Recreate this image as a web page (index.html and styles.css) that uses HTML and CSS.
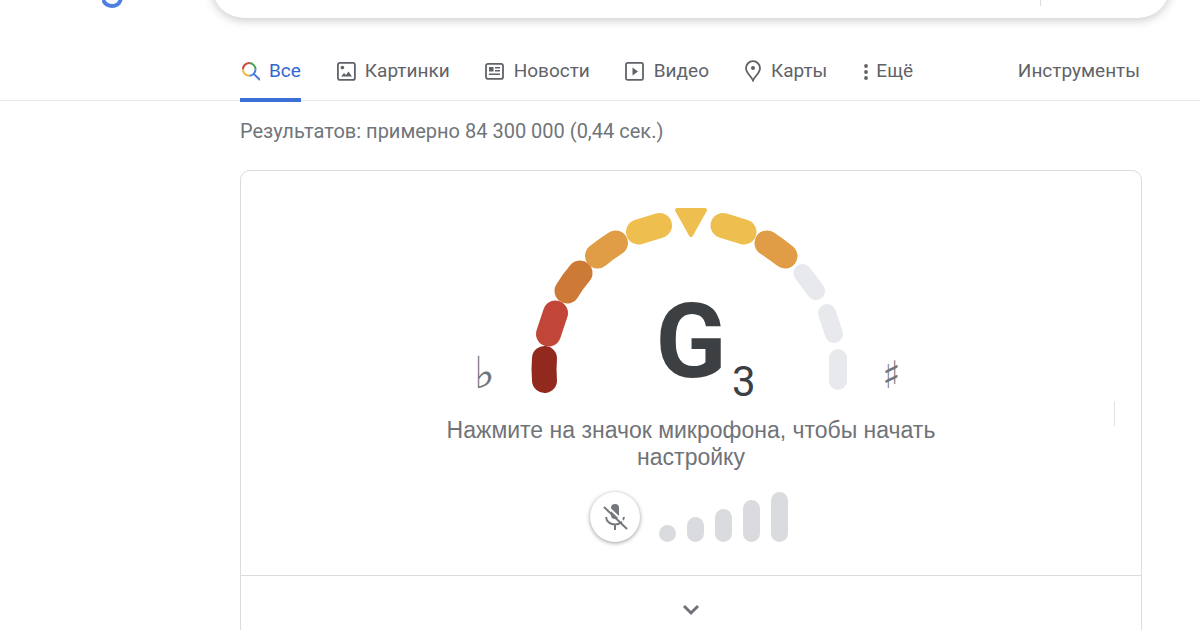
FILE: index.html
```html
<!DOCTYPE html>
<html lang="ru">
<head>
    <meta charset="UTF-8">
    <meta name="viewport" content="width=device-width, initial-scale=1.0">
    <title>Google</title>
    <link rel="stylesheet" href="styles.css">
</head>
<body>

<header class="header">
    <a class="logo" href="#" aria-label="Google">
        <svg width="22" height="30" viewBox="0 0 22 30" fill="none" stroke="#4f7fe0" stroke-width="4">
            <circle cx="10" cy="2" r="7"/>
            <path d="M19 0v18c0 6-3 10-9 10-4 0-7-2-9-6"/>
        </svg>
    </a>
    <form class="search">
        <input class="search-input" type="text" aria-label="Поиск">
        <span class="search-divider"></span>
    </form>
</header>

<nav class="nav">
    <div class="nav-inner">
        <a class="tab active" href="#">
            <svg width="20" height="20" viewBox="0 0 20 20" fill="none" stroke-width="2">
                <path d="M3 8.5A6.2 6.2 0 0 1 9 2" stroke="#d0473a"/>
                <path d="M9 2a6.4 6.4 0 0 1 6.5 6.5" stroke="#4a9c56"/>
                <path d="M15.5 8.5A6.2 6.2 0 0 1 9.3 14.7M13.7 12.9L20 19" stroke="#4a7bdc"/>
                <path d="M9.3 14.7A6.2 6.2 0 0 1 3 8.5" stroke="#efb93c"/>
            </svg>
            Все
        </a>
        <a class="tab" href="#">
            <svg width="20" height="20" viewBox="0 0 20 20">
                <rect x="1.9" y="1.9" width="17" height="17" rx="2" fill="none" stroke="#5f6368" stroke-width="1.8"/>
                <circle cx="6.4" cy="6.6" r="1.8" fill="#5f6368"/>
                <path d="M5 15.6l3-3.6 2 2 2.5-3.5 3.5 5.1z" fill="#5f6368"/>
            </svg>
            Картинки
        </a>
        <a class="tab" href="#">
            <svg width="20" height="20" viewBox="0 0 20 20">
                <rect x="1" y="2.9" width="17" height="15" rx="2" fill="none" stroke="#5f6368" stroke-width="1.8"/>
                <path d="M4 6h4.5v4.5H4zM10 6h5v1.6h-5zM10 9h5v1.6h-5zM4 12.4h11v1.7H4z" fill="#5f6368"/>
            </svg>
            Новости
        </a>
        <a class="tab" href="#">
            <svg width="20" height="20" viewBox="0 0 20 20">
                <rect x="1" y="1.9" width="17" height="17" rx="1.5" fill="none" stroke="#5f6368" stroke-width="1.8"/>
                <path d="M7.5 6.5v8l5.5-4z" fill="#5f6368"/>
            </svg>
            Видео
        </a>
        <a class="tab" href="#">
            <svg width="18" height="22" viewBox="0 0 18 22">
                <path d="M9 20.5C7.5 16.5 2 13 2 8.2a7 7 0 0 1 14 0C16 13 10.5 16.5 9 20.5z" fill="none" stroke="#5f6368" stroke-width="1.8"/>
                <circle cx="9" cy="8" r="2" fill="#5f6368"/>
            </svg>
            Карты
        </a>
        <a class="tab more" href="#">
            <svg width="8" height="20" viewBox="0 0 8 20" fill="#5f6368">
                <circle cx="4" cy="5" r="1.9"/>
                <circle cx="4" cy="11" r="1.9"/>
                <circle cx="4" cy="17" r="1.9"/>
            </svg>
            Ещё
        </a>
        <a class="tab tools" href="#">Инструменты</a>
    </div>
</nav>

<main class="main">
    <p class="stats">Результатов: примерно 84 300 000 (0,44 сек.)</p>

    <section class="card">
        <div class="tuner">
            <svg class="gauge" width="450" height="210" viewBox="0 0 450 210">
                <g class="segments">
                    <path d="M78.5 180.5Q77.5 169 78.5 158.5" stroke="#92291f"/>
                    <path d="M82.5 134L89.5 113" stroke="#c24637"/>
                    <path d="M101 91Q107 81 114 73" stroke="#ce7a37"/>
                    <path d="M131.5 56Q140 49 149.5 43" stroke="#e19d45"/>
                    <path d="M172.5 32L193.5 25.5" stroke="#eebf4f"/>
                    <path d="M257 25.5L278 32" stroke="#eebf4f"/>
                    <path d="M301 43Q310 49 319 56" stroke="#e19d45"/>
                </g>
                <g class="segments empty">
                    <path d="M336.5 73L350 91"/>
                    <path d="M361 113L368 134"/>
                    <path d="M372 158V181"/>
                </g>
                <path d="M211 10H239L225 35z" fill="#eebf4f" stroke="#eebf4f" stroke-width="4" stroke-linejoin="round"/>
                <text class="sign flat" x="8" y="188">♭</text>
                <text class="note" x="225" y="177">G</text>
                <text class="octave" x="266" y="196">3</text>
                <text class="sign sharp" x="416" y="188">♯</text>
            </svg>

            <p class="hint">Нажмите на значок микрофона, чтобы начать настройку</p>

            <div class="controls">
                <button class="mic" type="button" aria-label="Микрофон">
                    <svg width="28" height="28" viewBox="0 0 28 28">
                        <rect x="10" y="1" width="8" height="15" rx="4" fill="#74787c"/>
                        <path d="M5 14c1 10 17 10 18 0M14 21v6" fill="none" stroke="#74787c" stroke-width="2"/>
                        <path d="M5 2L28 24" stroke="#fff" stroke-width="2"/>
                        <path d="M3 4L26 26" stroke="#74787c" stroke-width="2"/>
                    </svg>
                </button>
                <div class="levels">
                    <span class="level level-1"></span>
                    <span class="level level-2"></span>
                    <span class="level level-3"></span>
                    <span class="level level-4"></span>
                    <span class="level level-5"></span>
                </div>
            </div>
            <span class="marker"></span>
        </div>
        <button class="expand" type="button" aria-label="Развернуть">
            <svg width="18" height="12" viewBox="0 0 18 12" fill="none" stroke="#707377" stroke-width="3">
                <path d="M2 2l7 7 7-7"/>
            </svg>
        </button>
    </section>
</main>

</body>
</html>
```
FILE: styles.css
```css
* {
    box-sizing: border-box;
}
body {
    margin: 0;
    background-color: #fff;
    color: #5f6368;
    font-family: Roboto, 'Liberation Sans', sans-serif;
    font-size: 19px;
    overflow: hidden;
}
.header {
    display: flex;
    margin-top: -46px;
    padding-right: 30px;
}
.logo {
    flex: 0 0 212px;
    display: flex;
    align-items: flex-end;
    height: 54px;
    padding-left: 102px;
}
.search {
    flex: 1;
    display: flex;
    height: 64px;
    padding: 0 129px 0 32px;
    border-radius: 32px;
    background-color: #fff;
    box-shadow: 0 2px 8px 1px rgba(64, 60, 67, 0.24);
}
.search-input {
    flex: 1;
    border: none;
    outline: none;
    background: transparent;
    font: inherit;
}
.search-divider {
    width: 1px;
    height: 40px;
    margin-top: 12px;
    background-color: #dadce0;
}
.nav {
    border-bottom: 1px solid #e8e9eb;
}
.nav-inner {
    display: flex;
    gap: 35px;
    height: 82px;
    max-width: 1140px;
    padding-left: 240px;
}
.tab {
    display: flex;
    align-items: center;
    gap: 9px;
    height: 84px;
    padding-top: 26px;
    border-bottom: 4px solid transparent;
    color: #5f6368;
    line-height: 24px;
    text-decoration: none;
    white-space: nowrap;
}
.tab.active {
    border-bottom-color: #3a6fd8;
    color: #3367d0;
}
.more {
    gap: 6px;
}
.tools {
    margin-left: auto;
}
.main {
    max-width: 1142px;
    padding-left: 240px;
}
.stats {
    margin: 0;
    padding: 18px 0 27px;
    color: #70757a;
    font-size: 20px;
    line-height: 24px;
}
.card {
    border: 1px solid #dadce0;
    border-radius: 10px;
}
.tuner {
    position: relative;
    display: flex;
    flex-direction: column;
    align-items: center;
    padding: 29px 24px 33px;
}
.segments {
    fill: none;
    stroke-width: 25;
    stroke-linecap: round;
}
.segments.empty {
    stroke: #e8e9ec;
    stroke-width: 18;
}
.note {
    fill: #3c4043;
    font-size: 104px;
    font-weight: 700;
    text-anchor: middle;
}
.octave {
    fill: #3c4043;
    font-size: 42px;
}
.sign {
    fill: #70757a;
    font-family: 'DejaVu Sans', sans-serif;
}
.flat {
    font-size: 44px;
}
.sharp {
    font-size: 38px;
}
.hint {
    max-width: 500px;
    margin: 7px 0 21px;
    color: #707377;
    font-family: 'Liberation Sans', Arial, sans-serif;
    font-size: 23px;
    line-height: 27px;
    text-align: center;
}
.controls {
    display: flex;
    align-items: center;
    gap: 19px;
    padding-right: 4px;
}
.mic {
    display: flex;
    justify-content: center;
    align-items: center;
    width: 50px;
    height: 50px;
    padding: 0;
    border: none;
    border-radius: 50%;
    background-color: #fff;
    box-shadow: 0 1px 4px rgba(0, 0, 0, 0.4);
    cursor: pointer;
}
.levels {
    display: flex;
    align-items: flex-end;
    gap: 11px;
}
.level {
    width: 17px;
    border-radius: 9px;
    background-color: #dadbdf;
}
.level-1 {
    height: 17px;
}
.level-2 {
    height: 25px;
}
.level-3 {
    height: 33px;
}
.level-4 {
    height: 42px;
}
.level-5 {
    height: 50px;
}
.marker {
    position: absolute;
    top: 230px;
    right: 26px;
    width: 1px;
    height: 25px;
    background-color: #e0e1e3;
}
.expand {
    display: flex;
    justify-content: center;
    align-items: center;
    width: 100%;
    height: 68px;
    padding: 0;
    border: none;
    border-top: 1px solid #dadce0;
    background: transparent;
    cursor: pointer;
}
```
